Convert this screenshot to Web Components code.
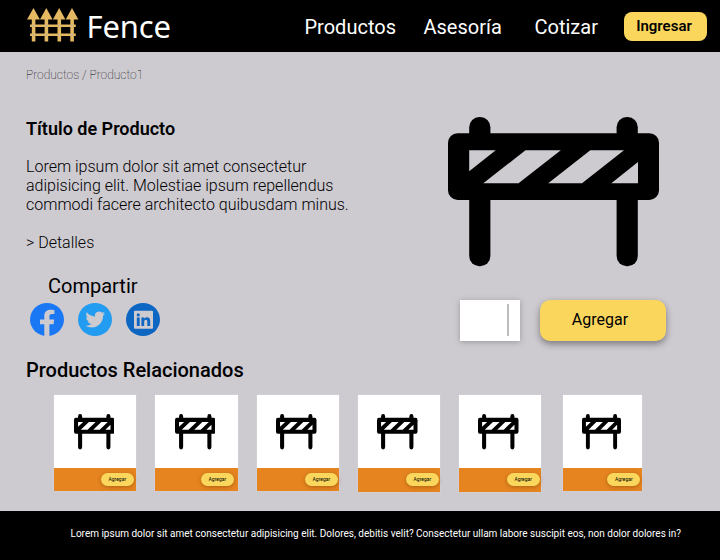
<!DOCTYPE html>
<html lang="es">
<head>
<meta charset="utf-8">
<title>Fence</title>
<style>
body{margin:0;font-family:Roboto,"Liberation Sans",sans-serif;color:#000;background:#cdcad0}
</style>
</head>
<body>
<fence-page></fence-page>
<script>
const define = (name, html) => {
  const t = document.createElement('template');
  t.innerHTML = html;
  customElements.define(name, class extends HTMLElement {
    constructor() {
      super();
      this.attachShadow({mode: 'open'}).append(t.content.cloneNode(true));
    }
  });
};

define('barrier-icon', `
<style>:host{display:block}svg{display:block;width:100%;height:100%}</style>
<svg viewBox="0 0 211 149.5" preserveAspectRatio="none" fill="#000">
  <rect x="21.2" y="0" width="21.2" height="149.3" rx="10.2"/>
  <rect x="168.6" y="0" width="21.2" height="149.3" rx="10.2"/>
  <rect x="0" y="16.3" width="211" height="66.6" rx="9.5"/>
  <path fill="var(--gap,#cdcad0)" d="M21.2 33.2H47.7L21.2 54.2ZM77.5 33.2H112.8L70.5 66.2H35.3ZM142.3 33.2H176L134 66.2H100.2ZM190 45V66.2H163.3Z"/>
</svg>`);

define('fence-logo', `
<style>
:host{display:flex;align-items:flex-start;gap:7.5px;color:#fff}
svg{display:block;margin-top:8px}
span{font:31px/44px "Noto Sans",sans-serif;padding-top:4px;letter-spacing:-.15px}
</style>
<svg width="52" height="34" viewBox="0 0 52 34" fill="#e5b961">
  <path d="M3 16.4H48.8V18.9H3ZM3 25.6H48.8V28.1H3Z"/>
  <path d="M6.5 0L12.9 11.5H8.4V33.5H4.8V11.5H0ZM19.3 0L25.6 11.5H21.2V33.5H17.6V11.5H13ZM32.2 0L38.4 11.5H34.1V33.5H30.5V11.5H25.9ZM45 0L51.4 11.5H46.9V33.5H43.3V11.5H38.7Z"/>
  <g fill="#bbb4aa"><circle cx="6.5" cy="17.5" r="1"/><circle cx="19.3" cy="17.5" r="1"/><circle cx="32.2" cy="17.5" r="1"/><circle cx="45" cy="17.5" r="1"/><circle cx="6.5" cy="26.7" r="1"/><circle cx="19.3" cy="26.7" r="1"/><circle cx="32.2" cy="26.7" r="1"/><circle cx="45" cy="26.7" r="1"/></g>
</svg><span>Fence</span>`);

define('fence-header', `
<style>
:host{display:flex;box-sizing:border-box;height:52px;background:#000;color:#fff;padding:0 13px 0 27px;justify-content:space-between}
nav{display:flex;align-items:flex-start;font-size:20px;line-height:24px;padding-top:12px}
a{white-space:nowrap;padding-top:3px}
a:nth-child(1){width:119px}a:nth-child(2){width:111px}a:nth-child(3){width:89.5px}
button{all:unset;box-sizing:border-box;width:83px;height:29px;padding-right:3px;border-radius:8px;background:#fad75c;color:#000;text-align:center;font:600 15px/29px Roboto,sans-serif}
</style>
<fence-logo></fence-logo>
<nav><a>Productos</a><a>Asesoría</a><a>Cotizar</a><button>Ingresar</button></nav>`);

define('share-links', `
<style>
:host{display:block}
h3{margin:0 0 5px 22px;font-size:20px;line-height:23px;font-weight:400}
div{display:flex;gap:14px;padding-left:4px}
svg{display:block;width:34px;height:33px}
</style>
<h3>Compartir</h3>
<div>
<svg viewBox="0 0 34 33" preserveAspectRatio="none"><ellipse cx="17" cy="16.5" rx="17" ry="16.5" fill="#1b78f4"/><path fill="#cdcad0" d="M14.3 33V21.3H10V16.6H14.3V13.1C14.3 9 16.7 6.8 20.4 6.8C22.2 6.8 24.4 7.2 24.4 7.2V11.1H22.1C20 11.1 19.4 12.3 19.4 13.7V16.6H24.2L23.5 21.3H19.4V33Z"/></svg>
<svg viewBox="0 0 34 33" preserveAspectRatio="none"><ellipse cx="17" cy="16.5" rx="17" ry="16.5" fill="#219cf0"/><path fill="#cdcad0" transform="translate(7.4 6.7) scale(.82)" d="M23.95 4.57a10 10 0 0 1-2.82.77 4.96 4.96 0 0 0 2.16-2.72c-.95.55-2 .95-3.13 1.18a4.92 4.92 0 0 0-8.38 4.48C7.69 8.1 4.07 6.13 1.64 3.16a4.82 4.82 0 0 0-.67 2.48c0 1.71.87 3.21 2.19 4.1a4.9 4.9 0 0 1-2.23-.62v.06a4.92 4.92 0 0 0 3.95 4.83 5 5 0 0 1-2.21.08 4.94 4.94 0 0 0 4.6 3.42A9.87 9.87 0 0 1 0 19.54a14 14 0 0 0 7.55 2.21c9.05 0 14-7.5 14-13.98 0-.21 0-.42-.02-.63a9.9 9.9 0 0 0 2.46-2.55z"/></svg>
<svg viewBox="0 0 34 33" preserveAspectRatio="none"><ellipse cx="17" cy="16.5" rx="17" ry="16.5" fill="#0d66c2"/><path fill="#cdcad0" fill-rule="evenodd" d="M9 7.7H26Q27 7.7 27 8.7V24.8Q27 25.8 26 25.8H9Q8 25.8 8 24.8V8.7Q8 7.7 9 7.7ZM10.8 14.6V22.9H13.7V14.6ZM12.25 10.3A1.6 1.6 0 1 0 12.25 13.5A1.6 1.6 0 1 0 12.25 10.3ZM15.4 14.6V22.9H18.2V18.8C18.2 16 21.3 16 21.3 18.6V22.9H24.2V17.8C24.2 13.8 19.8 13.4 18.2 15.8V14.6Z"/></svg>
</div>`);

define('add-button', `
<style>
:host{display:block;box-sizing:border-box;width:126px;height:41px;border-radius:10px;background:#fad75c;box-shadow:0 3px 7px rgba(0,0,0,.4);text-align:center;font-size:16px;line-height:40px;padding-right:6px}
:host([small]){width:33px;height:13px;border-radius:6.5px;font-size:5px;line-height:13px;padding:0;box-shadow:0 1px 4px rgba(90,40,0,.4)}
</style><slot>Agregar</slot>`);

define('quantity-box', `
<style>
:host{display:flex;box-sizing:border-box;width:60px;height:41px;background:#fff;box-shadow:0 1px 6px rgba(0,0,0,.25);justify-content:flex-end;padding:4px 11px 5px 0}
i{width:2px;background:#bdbdbd}
</style><i></i>`);

define('product-detail', `
<style>
:host{display:flex;box-sizing:border-box;justify-content:space-between;padding:16px 54px 0 26px;height:290px}
.info{width:350px}
.crumb{font-size:12px;line-height:14px;font-weight:100}
h1{margin:36px 0 18px;font-size:18px;line-height:21px;font-weight:600}
p{margin:0 0 19px;font-size:16px;line-height:19px;font-weight:300;white-space:nowrap}
share-links{margin-top:23px}
.buy{width:226px;padding-top:49px}
.buy barrier-icon{width:211px;height:149.5px;margin:0 0 33.5px 8px}
.row{display:flex;gap:20px;padding-left:20px}
</style>
<div class="info">
<div class="crumb">Productos / Producto1</div>
<h1>Título de Producto</h1>
<p>Lorem ipsum dolor sit amet consectetur<br>adipisicing elit. Molestiae ipsum repellendus<br>commodi facere architecto quibusdam minus.</p>
<p>&gt; Detalles</p>
<share-links></share-links>
</div>
<div class="buy"><barrier-icon></barrier-icon><div class="row"><quantity-box></quantity-box><add-button></add-button></div></div>`);

define('product-card', `
<style>
:host{display:flex;flex-direction:column;width:82.3px;height:96px;background:#fff;--gap:#fff;box-shadow:0 0 1px rgba(255,255,255,.6)}
.pic{display:flow-root;height:73.3px}
barrier-icon{width:var(--iw,40.5px);height:35.5px;margin:19.3px 0 0 var(--ix,19.6px)}
.bar{flex:1;display:flex;justify-content:flex-end;background:#e6851f;padding:4.7px var(--pad,2.5px) 0 0}
</style>
<div class="pic"><barrier-icon></barrier-icon></div>
<div class="bar"><add-button small></add-button></div>`);

define('related-products', `
<style>
:host{display:block;box-sizing:border-box;padding:17px 0 0 26px;height:169px}
h2{margin:0 0 13px;font-size:20px;line-height:23px;font-weight:500}
div{display:flex;gap:19px;padding-left:28px}
</style>
<h2>Productos Relacionados</h2>
<div>
<product-card></product-card><product-card style="--pad:3.7px"></product-card><product-card style="--pad:1px"></product-card><product-card style="--pad:1px;height:96.5px;width:82px"></product-card><product-card style="--pad:1.2px;height:96.5px;width:82px"></product-card><product-card style="width:79.5px;margin-left:3px;--pad:2px;--iw:39px;--ix:19px"></product-card>
</div>`);

define('fence-footer', `
<style>
:host{display:flex;height:49px;box-sizing:border-box;background:#000;color:#fff;font-size:10px;line-height:12px;padding:17px 0 0 70.5px;white-space:nowrap}
</style>
<span>Lorem ipsum dolor sit amet consectetur adipisicing elit. Dolores, debitis velit? Consectetur ullam labore suscipit eos, non dolor dolores in?</span>`);

define('fence-page', `
<style>:host{display:block;width:720px;height:560px;overflow:hidden;background:#cdcad0}</style>
<fence-header></fence-header>
<product-detail></product-detail>
<related-products></related-products>
<fence-footer></fence-footer>`);
</script>
</body>
</html>
